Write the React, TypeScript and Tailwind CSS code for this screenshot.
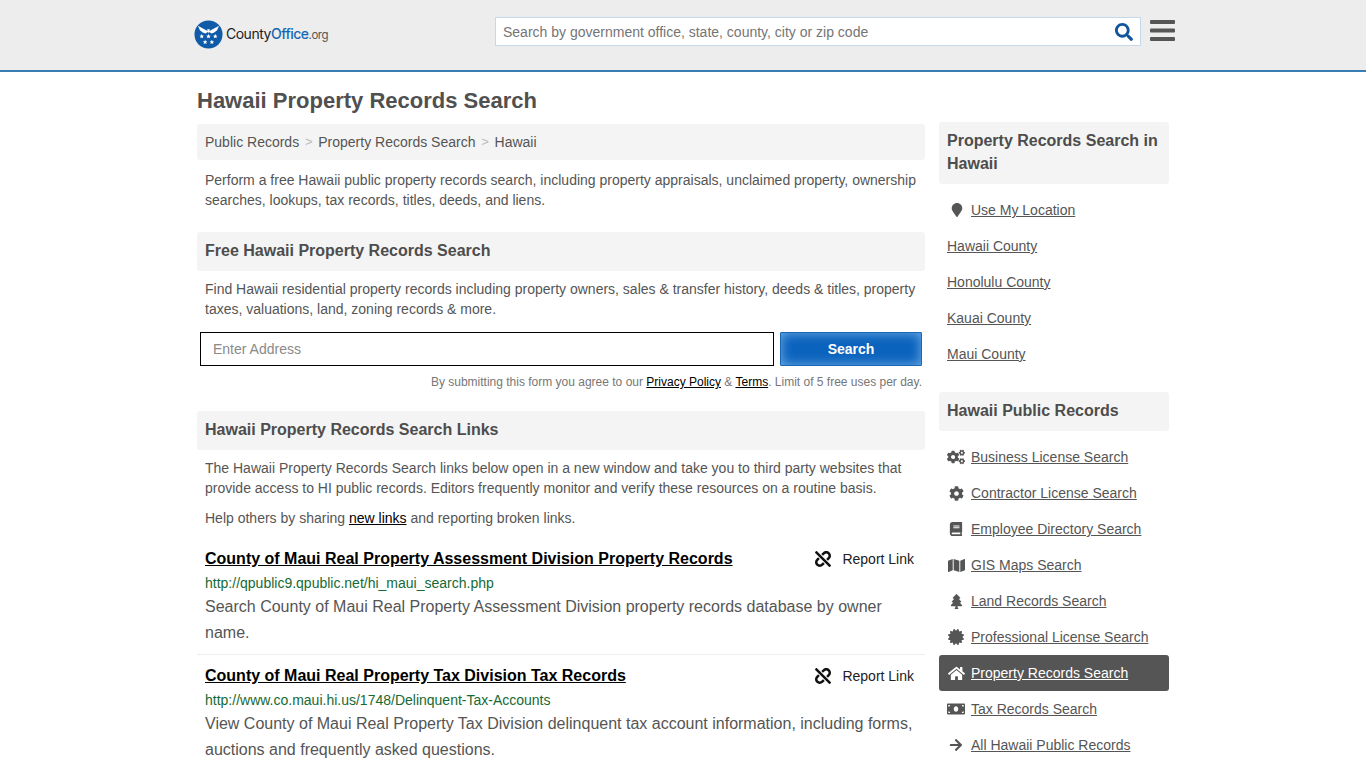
import React from 'react';
import {
  FaArrowRight,
  FaBook,
  FaCertificate,
  FaCog,
  FaCogs,
  FaHome,
  FaMap,
  FaMapMarker,
  FaMoneyBill,
  FaSearch,
  FaTree,
  FaUnlink,
} from 'react-icons/fa';

const counties = ['Hawaii County', 'Honolulu County', 'Kauai County', 'Maui County'];

const records = [
  { icon: FaCogs, label: 'Business License Search', size: 'text-[18px]' },
  { icon: FaCog, label: 'Contractor License Search', size: 'text-[15px]' },
  { icon: FaBook, label: 'Employee Directory Search', size: 'text-[14px]' },
  { icon: FaMap, label: 'GIS Maps Search', size: 'text-[17px]' },
  { icon: FaTree, label: 'Land Records Search', size: 'text-[15px]' },
  { icon: FaCertificate, label: 'Professional License Search', size: 'text-[16px]' },
  { icon: FaHome, label: 'Property Records Search', size: 'text-[17px]', active: true },
  { icon: FaMoneyBill, label: 'Tax Records Search', size: 'text-[18px]' },
  { icon: FaArrowRight, label: 'All Hawaii Public Records', size: 'text-[14px]' },
];

const links = [
  {
    title: 'County of Maui Real Property Assessment Division Property Records',
    url: 'http://qpublic9.qpublic.net/hi_maui_search.php',
    text: 'Search County of Maui Real Property Assessment Division property records database by owner name.',
  },
  {
    title: 'County of Maui Real Property Tax Division Tax Records',
    url: 'http://www.co.maui.hi.us/1748/Delinquent-Tax-Accounts',
    text: 'View County of Maui Real Property Tax Division delinquent tax account information, including forms, auctions and frequently asked questions.',
  },
];

const Logo = () => (
  <a className="flex items-center">
    <svg viewBox="0 0 30 30" className="w-[29px] h-[29px]">
      <circle cx="15" cy="15" r="14.5" fill="#0f5ba7" />
      <path d="M15 12 L4 6 L6 10 L5.500 10 L9 13 L12 14 Z M15 12 L26 6 L24 10 L24.500 10 L21 13 L18 14 Z" fill="#fff" />
      <path d="M13.500 9.500h3L15 14z" fill="#fff" />
      <path d="M8 14.500l.7 1.600 1.600.1-1.200 1 .4 1.600-1.500-.800-1.500.8.400-1.600-1.200-1 1.600-.1zM15 14.500l.7 1.600 1.600.1-1.200 1 .4 1.600-1.500-.800-1.500.8.400-1.600-1.200-1 1.600-.1zM22 14.500l.7 1.600 1.600.1-1.200 1 .4 1.600-1.500-.800-1.500.8.400-1.600-1.200-1 1.600-.1zM11.500 20.500l.7 1.600 1.600.1-1.200 1 .4 1.600-1.500-.800-1.500.8.400-1.600-1.200-1 1.600-.1zM18.500 20.500l.7 1.600 1.600.1-1.200 1 .4 1.600-1.500-.800-1.500.8.400-1.600-1.200-1 1.600-.1z" fill="#fff" />
    </svg>
    <span className="ml-[3px] font-['Inter',sans-serif] text-[14px] tracking-[-0.5px] text-[#222]">
      County<span className="font-medium text-[#1667b3]">Office</span>
      <span className="text-[11.500px] text-[#555]">.org</span>
    </span>
  </a>
);

const SectionHead = ({ children }: { children: React.ReactNode }) => (
  <h2 className="bg-[#f4f4f4] rounded-[3px] px-2 pt-[8px] pb-[10px] text-[16px] leading-[21px] font-bold text-[#4d4d4d]">{children}</h2>
);

export default function App() {
  return (
    <div className="h-screen overflow-hidden bg-white font-['Liberation_Sans',Arial,sans-serif] text-[14px] leading-5 text-[#555]">
      <header className="h-[72px] bg-[#ededee] border-b-2 border-[#3a7db5]">
        <div className="w-[972px] mx-auto h-full flex">
          <div className="w-[301px] flex items-center -ml-[3px] pb-[2px] shrink-0">
            <Logo />
          </div>
          <div className="flex items-start pt-[17px]">
            <div className="w-[646px] h-[29px] bg-white border border-[#c5d9ea] flex items-center justify-between pl-[7px] pr-[7px]">
              <span className="text-[14px] text-[#757575]">Search by government office, state, county, city or zip code</span>
              <FaSearch className="text-[18px] text-[#0f559d]" />
            </div>
            <svg viewBox="0 0 25 21" className="ml-[9px] mt-[3px] w-[25px] h-[21px] shrink-0">
              <rect x="0" y="0" width="25" height="4" rx="1" fill="#555" />
              <rect x="0" y="8.500" width="25" height="4" rx="1" fill="#555" />
              <rect x="0" y="17" width="25" height="4" rx="1" fill="#555" />
            </svg>
          </div>
        </div>
      </header>

      <div className="w-[972px] mx-auto flex justify-between">
        <main className="w-[728px]">
          <h1 className="mt-[15px] text-[22px] leading-[28px] font-bold text-[#505050]">Hawaii Property Records Search</h1>
          <nav className="mt-[9px] h-9 bg-[#f4f4f4] rounded-[3px] px-2 flex items-center">
            <span>Public Records</span>
            <span className="mx-[5.750px] text-[#bbb] text-[13px]">&gt;</span>
            <span>Property Records Search</span>
            <span className="mx-[5.750px] text-[#bbb] text-[13px]">&gt;</span>
            <span>Hawaii</span>
          </nav>
          <p className="mt-[10px] px-2">
            Perform a free Hawaii public property records search, including property appraisals, unclaimed property, ownership searches, lookups, tax records, titles, deeds, and liens.
          </p>

          <div className="mt-[22px]">
            <SectionHead>Free Hawaii Property Records Search</SectionHead>
          </div>
          <p className="mt-2 px-2">
            Find Hawaii residential property records including property owners, sales &amp; transfer history, deeds &amp; titles, property taxes, valuations, land, zoning records &amp; more.
          </p>
          <div className="mt-[13px] px-[3px] flex justify-between">
            <div className="w-[574px] h-[34px] border border-black flex items-center pl-3 text-[#8a8a8a]">Enter Address</div>
            <button className="w-[142px] h-[34px] border border-[#1a68b4] rounded-[1px] bg-[#0b63bd] shadow-[inset_0_0_12px_rgba(150,200,245,0.75)] text-white font-bold">
              Search
            </button>
          </div>
          <p className="mt-[6px] px-[3px] text-right text-[12px] leading-5 text-[#777]">
            By submitting this form you agree to our <a className="text-black underline">Privacy Policy</a> &amp; <a className="text-black underline">Terms</a>. Limit of 5 free uses per day.
          </p>

          <div className="mt-[19px]">
            <SectionHead>Hawaii Property Records Search Links</SectionHead>
          </div>
          <p className="mt-2 px-2">
            The Hawaii Property Records Search links below open in a new window and take you to third party websites that provide access to HI public records. Editors frequently monitor and verify these resources on a routine basis.
          </p>
          <p className="mt-[10px] px-2">
            Help others by sharing <a className="text-black underline">new links</a> and reporting broken links.
          </p>

          <div className="mt-[10px]">
            {links.map((link, i) => (
              <article key={link.url} className={`px-2 pb-[8px] pt-[11px] ${i === 0 ? 'border-b border-[#eee]' : ''}`}>
                <div className="flex items-center justify-between h-[20px]">
                  <a className="text-[16px] font-bold text-black underline">{link.title}</a>
                  <span className="flex items-center text-[14px] text-[#222] mr-[3px]">
                    <FaUnlink className="text-[16px] text-[#111] mr-[11px]" />
                    Report Link
                  </span>
                </div>
                <div className="mt-[4px] text-[#166a34]">{link.url}</div>
                <p className="mt-[1px] text-[16px] leading-[26px] text-[#555]">{link.text}</p>
              </article>
            ))}
          </div>
        </main>

        <aside className="w-[230px] pt-[50px]">
          <h2 className="bg-[#f4f4f4] rounded-[3px] px-2 pt-[7px] pb-[9px] text-[16px] leading-[23px] font-bold text-[#4d4d4d]">
            Property Records Search in Hawaii
          </h2>
          <ul className="mt-2 mb-[20px]">
            <li className="h-9 px-2 flex items-center">
              <span className="w-6 flex justify-start pl-[3px]">
                <FaMapMarker className="text-[14px] text-[#555]" />
              </span>
              <a className="underline">Use My Location</a>
            </li>
            {counties.map((c) => (
              <li key={c} className="h-9 px-2 flex items-center">
                <a className="underline">{c}</a>
              </li>
            ))}
          </ul>
          <SectionHead>Hawaii Public Records</SectionHead>
          <ul className="mt-2">
            {records.map((r) => (
              <li
                key={r.label}
                className={`h-9 px-2 flex items-center rounded-[3px] ${r.active ? 'bg-[#555] text-white' : ''}`}
              >
                <span className="w-6 h-full shrink-0 flex items-center">
                  <span className="w-[18px] flex justify-center">
                    <r.icon className={`${r.size} ${r.active ? 'text-white' : 'text-[#555]'}`} />
                  </span>
                </span>
                <a className="underline">{r.label}</a>
              </li>
            ))}
          </ul>
        </aside>
      </div>
    </div>
  );
}
